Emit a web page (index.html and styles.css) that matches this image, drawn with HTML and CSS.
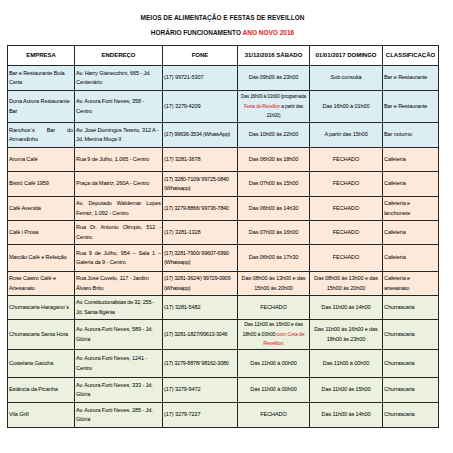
FILE: index.html
```html
<!DOCTYPE html>
<html lang="pt-BR">
<head>
<meta charset="utf-8">
<title>Meios de alimentação e festas de Reveillon</title>
<link rel="stylesheet" href="styles.css">
</head>
<body>
<div class="page">
  <header class="title">
    <div class="t1">MEIOS DE ALIMENTAÇÃO E FESTAS DE REVEILLON</div>
    <div class="t2">HORÁRIO FUNCIONAMENTO <span class="red">ANO NOVO 2016</span></div>
  </header>
  <table class="grid">
    <colgroup>
      <col class="c1"><col class="c2"><col class="c3"><col class="c4"><col class="c5"><col class="c6">
    </colgroup>
    <thead>
      <tr class="head">
        <th>EMPRESA</th><th>ENDEREÇO</th><th>FONE</th><th>31/12/2016 SÁBADO</th><th>01/01/2017 DOMINGO</th><th>CLASSIFICAÇÃO</th>
      </tr>
    </thead>
    <tbody>
      <tr class="blue h25">
        <td>Bar e Restaurante Bola Certa</td><td>Av. Harry Gianecchini, 665 - Jd. Centenário</td><td>(17) 99721-5307</td><td class="ctr">Das 09h00 às 23h00</td><td class="ctr">Sob consulta</td><td>Bar e Restaurante</td>
      </tr>
      <tr class="blue h32">
        <td>Dona Aurora Restaurante Bar</td><td>Av. Aurora Forti Neves, 358 - Centro</td><td>(17) 3279-4209</td><td class="ctr sm xs">Das 16h00 à 01h00 (programada<br><span class="red">Festa de Revellion</span> a partir das<br>21h00)</td><td class="ctr">Das 16h00 à 01h00</td><td>Bar e Restaurante</td>
      </tr>
      <tr class="blue h25">
        <td class="just">Ranchos´s Bar do Armandinho</td><td>Av. José Domingos Terezo, 312 A - Jd. Menina Moça II</td><td class="tight">(17) 99636-3534 (WhatsApp)</td><td class="ctr">Das 10h00 às 22h00</td><td class="ctr">A partir das 15h00</td><td>Bar noturno</td>
      </tr>
      <tr class="peach h24">
        <td>Aroma Café</td><td>Rua 9 de Julho, 1.065 - Centro</td><td>(17) 3281-3678</td><td class="ctr">Das 06h30 às 18h00</td><td class="ctr">FECHADO</td><td>Cafeteria</td>
      </tr>
      <tr class="peach h25">
        <td>Bistrô Café 1959</td><td>Praça da Matriz, 260A - Centro</td><td class="tight">(17) 3280-7109/ 99725-0840 (Whatsapp)</td><td class="ctr">Das 07h00 às 15h00</td><td class="ctr">FECHADO</td><td>Cafeteria</td>
      </tr>
      <tr class="peach h24">
        <td>Café Avenida</td><td class="just">Av. Deputado Waldemar Lopes Ferraz, 1.092 - Centro</td><td class="tight">(17) 3279-8866/ 99736-7840</td><td class="ctr">Das 06h00 às 14h30</td><td class="ctr">FECHADO</td><td>Cafeteria e<br>lanchonete</td>
      </tr>
      <tr class="peach h24">
        <td>Café i Prosa</td><td class="just">Rua Dr. Antonio Olimpio, 512 - Centro</td><td>(17) 3281-1328</td><td class="ctr">Das 07h00 às 16h00</td><td class="ctr">FECHADO</td><td>Cafeteria</td>
      </tr>
      <tr class="peach h27">
        <td>Marcão Café e Refeição</td><td class="just">Rua 9 de Julho, 954 – Sala 1 – Galeria da 9 - Centro</td><td class="tight">(17) 3281-7900/ 99607-6990 (Whatsapp)</td><td class="ctr">Das 06h00 às 17h30</td><td class="ctr">FECHADO</td><td>Cafeteria</td>
      </tr>
      <tr class="peach h24">
        <td>Rose Castro Café e Artesanato</td><td>Rua José Covelo, 117 - Jardim Álvaro Brito</td><td class="tight">(17) 3281-3624/) 99729-0909 (Whatsapp)</td><td class="ctr">Das 08h00 às 13h00 e das 15h00 às 20h00</td><td class="ctr">Das 08h00 às 13h00 e das 15h00 às 20h00</td><td>Cafeteria e<br>artesanato</td>
      </tr>
      <tr class="green h24">
        <td>Churrascaria Haragano´s</td><td class="tight">Av. Constitucionalistas de 32, 255 - Jd. Santa Ifigênia</td><td>(17) 3281-5482</td><td class="ctr">FECHADO</td><td class="ctr">Das 11h00 às 14h00</td><td>Churrascaria</td>
      </tr>
      <tr class="green h30">
        <td>Churrascaria Santa Hora</td><td>Av. Aurora Forti Neves, 589 - Jd. Glória</td><td class="tight">(17) 3281-1827/99613-3046</td><td class="ctr sm">Das 11h00 às 16h00 e das<br>18h00 à 00h00 <span class="red">com Ceia de</span><br><span class="red">Revellion</span></td><td class="ctr">Das 11h00 às 16h00 e das 18h00 às 23h00</td><td>Churrascaria</td>
      </tr>
      <tr class="green h28">
        <td>Costelaria Gaúcha</td><td>Av. Aurora Forti Neves, 1241 - Centro</td><td class="tight">(17) 3279-8878/ 98162-3080</td><td class="ctr">Das 11h00 à 00h00</td><td class="ctr">Das 11h00 à 00h00</td><td>Churrascaria</td>
      </tr>
      <tr class="green h25">
        <td>Estância da Picanha</td><td>Av. Aurora Forti Neves, 333 - Jd. Glória</td><td>(17) 3279-9472</td><td class="ctr">Das 11h00 à 00h00</td><td class="ctr">Das 11h00 às 15h00</td><td>Churrascaria</td>
      </tr>
      <tr class="green h25">
        <td>Vila Grill</td><td>Av. Aurora Forti Neves, 285 - Jd. Glória</td><td>(17) 3279-7227</td><td class="ctr">FECHADO</td><td class="ctr">Das 11h00 às 14h00</td><td>Churrascaria</td>
      </tr>
    </tbody>
  </table>
</div>
</body>
</html>
```
FILE: styles.css
```css
html, body {
  margin: 0;
  padding: 0;
  background: #ffffff;
}
.page {
  width: 453px;
  height: 453px;
  padding: 10px 0 0 7px;
  box-sizing: border-box;
  font-family: "Liberation Sans", Arial, sans-serif;
  color: #000;
}
.title {
  width: 431px;
  text-align: center;
  font-weight: bold;
  font-size: 6.5px;
  line-height: 15px;
  margin-bottom: 5px;
  color: #111;
}
.red { color: #e0201b; }
.grid {
  border-collapse: collapse;
  table-layout: fixed;
  width: 431px;
  font-size: 5.6px;
  line-height: 9.5px;
  letter-spacing: -0.12px;
}
.c1 { width: 67px; }
.c2 { width: 88px; }
.c3 { width: 75px; }
.c4 { width: 72px; }
.c5 { width: 73px; }
.c6 { width: 56px; }
.grid th, .grid td {
  border: 1px solid #262626;
  padding: 0 1px;
  vertical-align: middle;
  text-align: left;
  overflow: hidden;
}
.grid th {
  height: 19px;
  font-size: 6px;
  font-weight: bold;
  letter-spacing: 0;
  text-align: center;
  background: #ffffff;
}
.grid td.ctr { text-align: center; }
.grid td.just { text-align: justify; text-align-last: left; }
.grid td.sm { line-height: 9.5px; font-size: 5.2px; white-space: nowrap; }
.grid td.xs { font-size: 4.8px; letter-spacing: -0.2px; }
.grid td.tight { letter-spacing: -0.25px; }
.blue td { background: #dbeef4; }
.peach td { background: #fde9d9; }
.green td { background: #ebf1de; }
.h24 td { height: 23px; }
.h25 td { height: 24px; }
.h27 td { height: 26px; }
.h28 td { height: 27px; }
.h30 td { height: 29px; }
.h32 td { height: 31px; }
```
